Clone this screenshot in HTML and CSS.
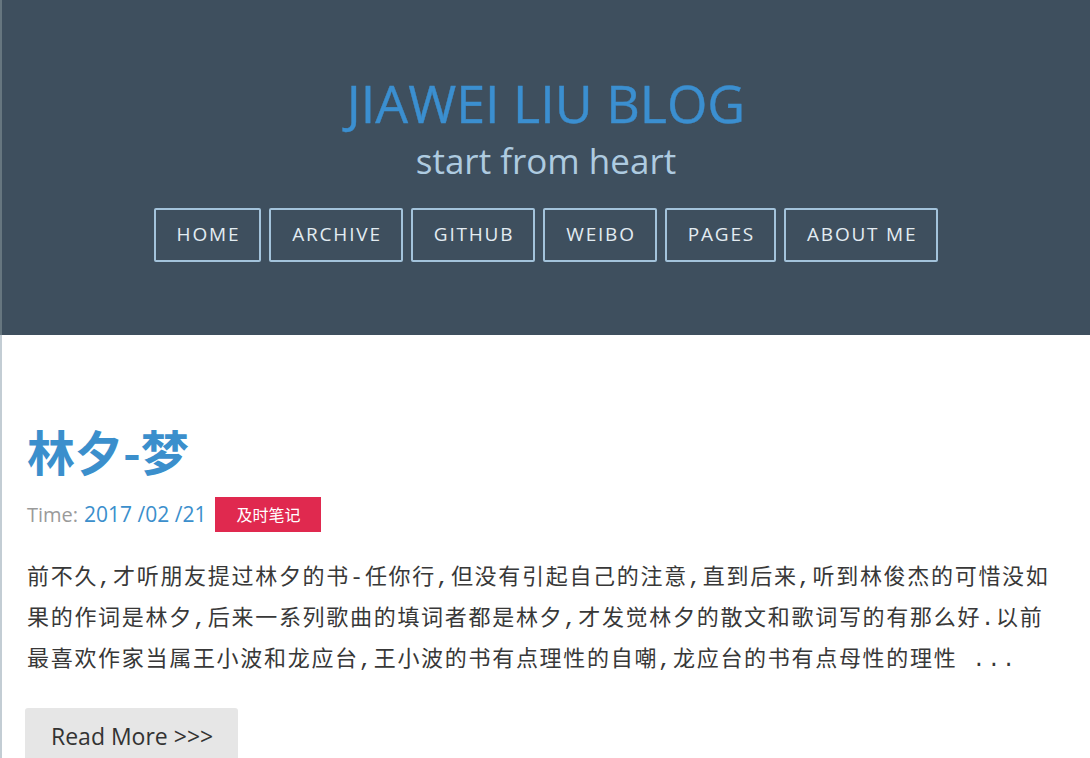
FILE: index.html
```html
<!DOCTYPE html>
<html lang="zh-CN">
<head>
<meta charset="utf-8">
<title>JIAWEI LIU BLOG</title>
<link rel="stylesheet" href="styles.css">
</head>
<body>
<header class="site-header">
  <h1 class="site-title">JIAWEI LIU BLOG</h1>
  <p class="site-tagline">start from heart</p>
  <nav class="site-nav">
    <a class="nav-item" href="#">HOME</a>
    <a class="nav-item" href="#">ARCHIVE</a>
    <a class="nav-item" href="#">GITHUB</a>
    <a class="nav-item" href="#">WEIBO</a>
    <a class="nav-item" href="#">PAGES</a>
    <a class="nav-item" href="#">ABOUT ME</a>
  </nav>
</header>
<main class="content">
  <article class="post">
    <h2 class="post-title">林夕-梦</h2>
    <div class="post-meta">
      <span class="meta-label">Time:</span>
      <span class="meta-date">2017 /02 /21</span>
      <span class="meta-tag">及时笔记</span>
    </div>
    <p class="post-excerpt">前不久,才听朋友提过林夕的书-任你行,但没有引起自己的注意,直到后来,听到林俊杰的可惜没如果的作词是林夕,后来一系列歌曲的填词者都是林夕,才发觉林夕的散文和歌词写的有那么好.以前最喜欢作家当属王小波和龙应台,王小波的书有点理性的自嘲,龙应台的书有点母性的理性 ...</p>
    <a class="read-more" href="#">Read More &gt;&gt;&gt;</a>
  </article>
</main>
</body>
</html>
```

FILE: styles.css
```css
html, body {
  margin: 0;
  padding: 0;
  background: #ffffff;
}

body {
  font-family: "Open Sans", "Noto Sans CJK SC", sans-serif;
  overflow: hidden;
}

.site-header {
  background: #3e4f5e;
  border-left: 2px solid #66767f;
  padding: 72px 0 73px;
  text-align: center;
}

.site-title {
  margin: 0;
  font-family: "Open Sans", sans-serif;
  font-weight: 400;
  font-size: 52px;
  line-height: 1.2;
  color: #3b8fd0;
  -webkit-text-stroke: 0.4px #3b8fd0;
}

.site-tagline {
  margin: 6px 0 0;
  font-family: "Open Sans", sans-serif;
  font-size: 35px;
  line-height: 1.2;
  color: #aecbe0;
}

.site-nav {
  margin-top: 26px;
  display: flex;
  justify-content: center;
  gap: 8px;
}

.nav-item {
  display: block;
  border: 2px solid #a3c3db;
  border-radius: 2px;
  padding: 12px 19px 13px 21px;
  font-size: 19px;
  line-height: 25px;
  letter-spacing: 1.8px;
  color: #e3ecf2;
  text-decoration: none;
}

.content {
  border-left: 2px solid #c3cdd4;
  padding: 87px 23px 0 25px;
}

.post-title {
  margin: 0;
  font-family: "Noto Sans CJK SC", sans-serif;
  font-weight: 700;
  font-size: 48px;
  line-height: 1.2;
  color: #3b8fcc;
}

.post-meta {
  margin-top: 17px;
  height: 35px;
  display: flex;
  align-items: center;
  font-size: 20px;
}

.meta-label {
  color: #9a9a9a;
  margin-right: 6px;
}

.meta-date {
  color: #3b8fcc;
  font-size: 21px;
  margin-right: 9px;
}

.meta-tag {
  background: #e0294f;
  color: #ffffff;
  font-family: "Noto Sans CJK SC", sans-serif;
  font-size: 16px;
  line-height: 35px;
  padding: 0 21px;
}

.post-excerpt {
  margin: 26px 0 0;
  font-family: "Liberation Mono", "Noto Sans CJK SC", monospace;
  font-size: 22px;
  line-height: 41px;
  letter-spacing: 1.7px;
  color: #383838;
}

.read-more {
  display: inline-block;
  margin: 27px 0 0 -2px;
  background: #e6e6e6;
  border-radius: 3px;
  padding: 12px 25px 12px 26px;
  font-size: 23px;
  line-height: 32px;
  color: #333333;
  text-decoration: none;
}
```
